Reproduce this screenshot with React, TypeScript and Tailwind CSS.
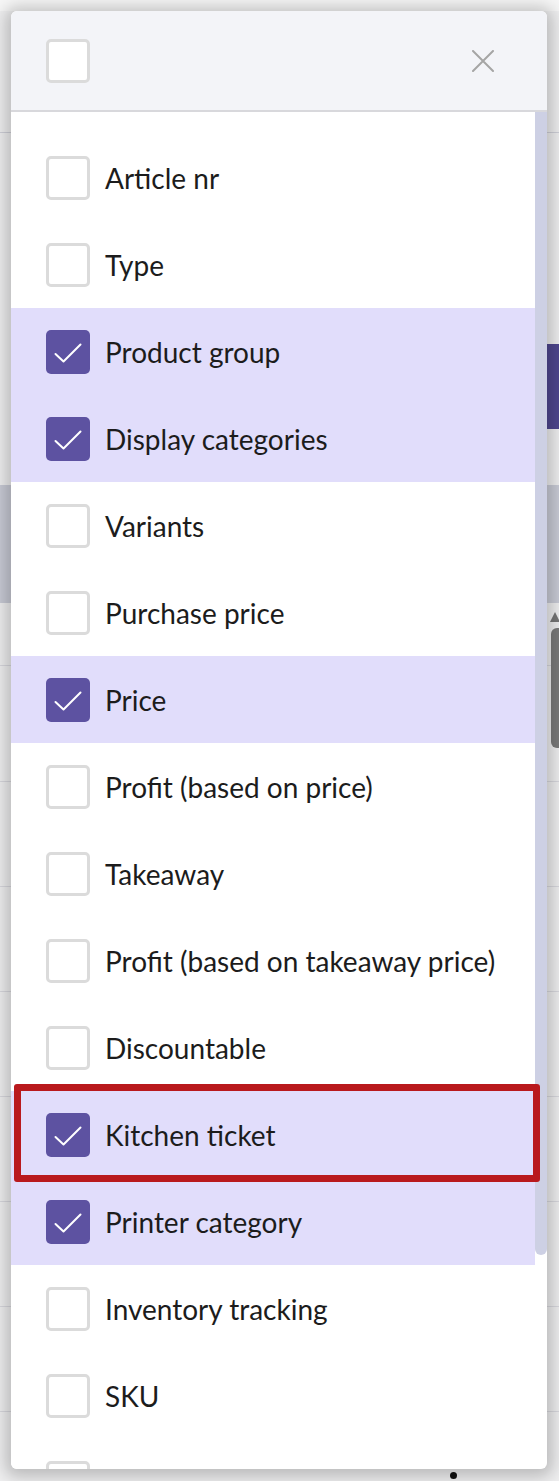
const columns = [
  { label: 'Article nr', checked: false },
  { label: 'Type', checked: false },
  { label: 'Product group', checked: true },
  { label: 'Display categories', checked: true },
  { label: 'Variants', checked: false },
  { label: 'Purchase price', checked: false },
  { label: 'Price', checked: true },
  { label: 'Profit (based on price)', checked: false },
  { label: 'Takeaway', checked: false },
  { label: 'Profit (based on takeaway price)', checked: false },
  { label: 'Discountable', checked: false },
  { label: 'Kitchen ticket', checked: true },
  { label: 'Printer category', checked: true },
  { label: 'Inventory tracking', checked: false },
  { label: 'SKU', checked: false },
  // next row is scrolled out of view, only its checkbox edge shows
  { label: '', checked: false },
];

function Checkbox({ checked }: { checked: boolean }) {
  if (checked) {
    return (
      <span className="flex h-[44px] w-[44px] shrink-0 items-center justify-center rounded-[5px] bg-[#5d52a1]">
        <svg width="44" height="44" viewBox="0 0 44 44" fill="none">
          <path d="M9.5 24 L17.5 31.5 L34.5 14.5" stroke="#ffffff" strokeWidth="2" strokeLinecap="round" strokeLinejoin="round" />
        </svg>
      </span>
    );
  }
  return <span className="block h-[44px] w-[44px] shrink-0 rounded-[5px] border-[3px] border-[#dbdbdb] bg-white" />;
}

function Backdrop() {
  return (
    <div className="flex h-full flex-col bg-[#efeff0]">
      <div className="h-[11px] bg-[#f6f6f6]" />
      <div className="h-[122px] border-b border-[#cfd0d8]" />
      <div className="h-[211px]" />
      <div className="flex h-[85px] justify-end">
        <div className="w-[120px] bg-[#4f478f]" />
      </div>
      <div className="h-[56px]" />
      <div className="h-[118px] bg-[#c9cbd6]" />
      <div className="flex h-[63px] justify-end border-b border-[#d8d8de]">
        <div className="mt-[9px] flex w-[8px] flex-col items-center">
          <span className="h-0 w-0 border-x-[5px] border-b-[10px] border-x-transparent border-b-[#777777]" />
        </div>
      </div>
      <div className="flex h-[116px] justify-end border-b border-[#d8d8de]">
        <div className="-mt-[38px] h-[120px] w-[8px] rounded-l-[6px] bg-[#7a7a7a]" />
      </div>
      {[0, 1, 2, 3, 4, 5].map(i => (
        <div key={i} className="h-[105px] border-b border-[#d8d8de]" />
      ))}
      <div className="flex flex-1 justify-end pr-[102px]">
        <div className="flex flex-col items-center gap-[3px] pt-[50px]">
          <span className="h-[7px] w-[7px] rounded-full bg-[#111]" />
          <span className="h-[7px] w-[7px] rounded-full bg-[#111]" />
        </div>
      </div>
    </div>
  );
}

export default function App() {
  return (
    <div className="relative h-[1481px] w-[559px] overflow-hidden font-['Lato','Noto_Sans',sans-serif]">
      <Backdrop />
      <div className="absolute left-[11px] top-[11px] flex h-[1458px] w-[536px] flex-col overflow-hidden rounded-[6px] bg-white shadow-[0_2px_16px_6px_rgba(0,0,0,0.22)]">
        <div className="flex h-[101px] shrink-0 items-center justify-between border-b-2 border-[#d8d8dc] bg-[#f3f4f8] pl-[35px] pr-[53px]">
          <Checkbox checked={false} />
          <svg width="22" height="22" viewBox="0 0 22 22" fill="none">
            <path d="M1 1 L21 21 M21 1 L1 21" stroke="#a5a5a5" strokeWidth="2" strokeLinecap="round" />
          </svg>
        </div>
        <div className="relative flex-1 overflow-hidden">
          <div className="w-[524px] pt-[22px]">
            {columns.map((c, i) => (
              <div
                key={i}
                className={`flex h-[87px] items-center gap-[15px] pl-[35px] ${c.checked ? 'bg-[#e1ddfb]' : 'bg-white'}`}
              >
                <Checkbox checked={c.checked} />
                {c.label && <span className="text-[28px] leading-none text-[#1c1c1c]">{c.label}</span>}
              </div>
            ))}
          </div>
          <div className="absolute right-0 top-0 h-[1143px] w-[12px] rounded-b-[6px] bg-[#cdd0e4]" />
          <div className="absolute left-[3px] top-[972px] h-[98px] w-[526px] rounded-[3px] border-[7px] border-[#b9191d]" />
        </div>
      </div>
    </div>
  );
}
